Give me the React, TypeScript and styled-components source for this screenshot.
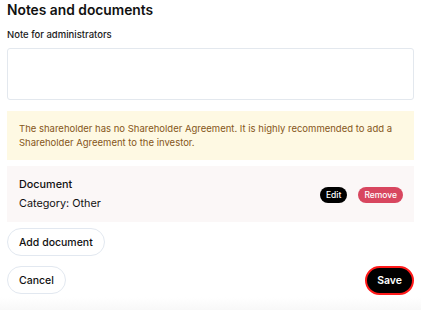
import styled, { createGlobalStyle } from "styled-components";

const GlobalStyle = createGlobalStyle`
  body {
    margin: 0;
    background: #fff;
    font-family: "Inter", "Noto Sans", sans-serif;
    color: #111;
  }
`;

const Page = styled.div`
  display: flex;
  flex-direction: column;
  padding: 0 7px;
  min-height: 310px;
  box-sizing: border-box;
  background: linear-gradient(to bottom, #fff 0, #fff 297px, #f8f8f8 310px);
`;

const Title = styled.h2`
  margin: 0;
  font-size: 13.8px;
  line-height: 20px;
  font-weight: 600;
  color: #111;
`;

const Label = styled.label`
  margin-top: 8px;
  font-size: 9.5px;
  line-height: 14px;
  font-weight: 500;
  color: #1a1a1a;
`;

const NoteArea = styled.textarea`
  margin-top: 6px;
  height: 52px;
  box-sizing: border-box;
  border: 1px solid #e3e8ee;
  border-radius: 3px;
  resize: none;
  outline: none;
  font-family: inherit;
  font-size: 10px;
  padding: 6px 8px;
`;

const Warning = styled.div`
  margin-top: 11px;
  padding: 11px 12px 10px;
  background: #fef9e3;
  color: #85561a;
  font-size: 9.5px;
  line-height: 14px;
`;

const DocCard = styled.div`
  margin-top: 6px;
  padding: 10px 11px 9px 12px;
  background: #fbf7f7;
  display: flex;
  align-items: center;
  justify-content: space-between;
`;

const DocInfo = styled.div`
  display: flex;
  flex-direction: column;
`;

const DocName = styled.span`
  font-size: 10.8px;
  line-height: 18px;
  font-weight: 500;
`;

const DocCategory = styled.span`
  font-size: 10.8px;
  line-height: 19px;
`;

const Actions = styled.div`
  display: flex;
  gap: 11px;
  align-items: center;
`;

const Pill = styled.button<{ tone: "dark" | "danger" }>`
  border: none;
  height: 16px;
  padding: 0 6px;
  border-radius: 8px;
  font-family: inherit;
  font-size: 8.5px;
  font-weight: 500;
  color: #fff;
  background: ${({ tone }) => (tone === "dark" ? "#000" : "#d8465f")};
`;

const OutlineButton = styled.button`
  align-self: flex-start;
  height: 28px;
  padding: 0 11px;
  box-sizing: border-box;
  border: 1px solid #e2e8f0;
  border-radius: 14px;
  background: #fff;
  font-family: inherit;
  font-size: 10.5px;
  font-weight: 500;
  color: #111;
`;

const AddRow = styled.div`
  margin-top: 6px;
  display: flex;
`;

const Footer = styled.div`
  margin-top: 10px;
  display: flex;
  justify-content: space-between;
  align-items: center;
`;

const SaveButton = styled.button`
  height: 29px;
  padding: 0 10px;
  box-sizing: border-box;
  border: 2px solid #ff1a1a;
  border-radius: 15px;
  background: #000;
  color: #fff;
  font-family: inherit;
  font-size: 10.5px;
  font-weight: 600;
`;

const App = () => {
  return (
    <>
      <GlobalStyle />
      <Page>
        <Title>Notes and documents</Title>
        <Label>Note for administrators</Label>
        <NoteArea />
        <Warning>
          The shareholder has no Shareholder Agreement. It is highly recommended to add a
          Shareholder Agreement to the investor.
        </Warning>
        <DocCard>
          <DocInfo>
            <DocName>Document</DocName>
            <DocCategory>Category: Other</DocCategory>
          </DocInfo>
          <Actions>
            <Pill tone="dark">Edit</Pill>
            <Pill tone="danger">Remove</Pill>
          </Actions>
        </DocCard>
        <AddRow>
          <OutlineButton>Add document</OutlineButton>
        </AddRow>
        <Footer>
          <OutlineButton>Cancel</OutlineButton>
          <SaveButton>Save</SaveButton>
        </Footer>
      </Page>
    </>
  );
};

export default App;
